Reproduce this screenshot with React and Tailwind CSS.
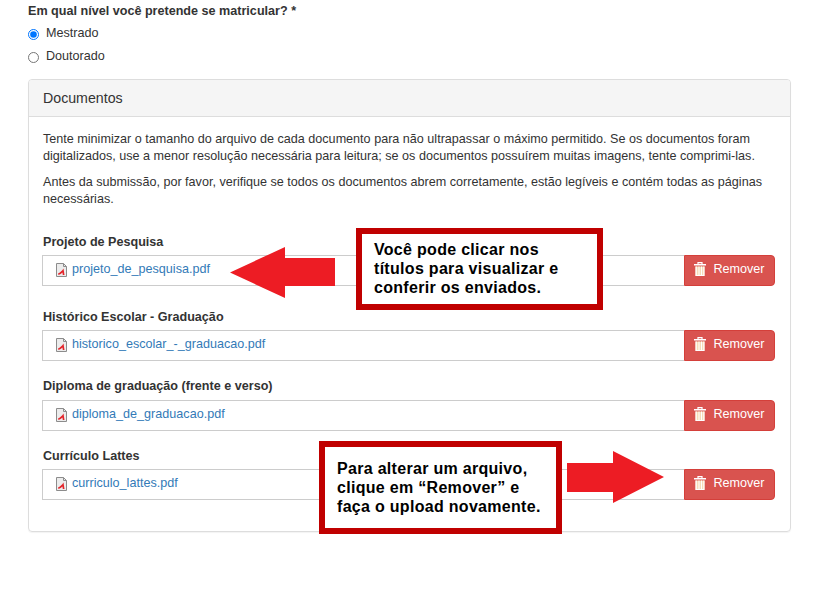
import React from 'react';

const documents = [
  { title: 'Projeto de Pesquisa', file: 'projeto_de_pesquisa.pdf', gap: 'mt-[26px]', inputGap: 'mt-[4px]' },
  { title: 'Histórico Escolar - Graduação', file: 'historico_escolar_-_graduacao.pdf', gap: 'mt-[23px]', inputGap: 'mt-[4px]' },
  { title: 'Diploma de graduação (frente e verso)', file: 'diploma_de_graduacao.pdf', gap: 'mt-[17px]', inputGap: 'mt-[5px]' },
  { title: 'Currículo Lattes', file: 'curriculo_lattes.pdf', gap: 'mt-[17px]', inputGap: 'mt-[4px]' },
];

const PdfIcon = () => (
  <svg width="11" height="14" viewBox="0 0 11 14" className="shrink-0 -translate-y-px">
    <path d="M0.5 0.5H7.5L10.5 3.5V13.5H0.5Z" fill="#ececec" stroke="#8c8c8c" />
    <path d="M7.5 0.5V3.5H10.5" fill="none" stroke="#8c8c8c" />
    <path d="M2 10.5C4 9.5 6 8 7.5 5.5L8.5 12H6.8L6.4 9.5C5.5 10.5 4 11.5 2.5 12Z" fill="#e3252b" />
  </svg>
);

const TrashIcon = () => (
  <svg width="12" height="14" viewBox="0 0 12 14" className="shrink-0 -translate-y-[2px]">
    <path d="M4 2V0.6H8V2" fill="none" stroke="#fff" strokeWidth="1.2" />
    <rect x="0" y="2" width="12" height="1.5" fill="#fff" />
    <path d="M1.5 4.5H10.5V14H1.5Z" fill="#f6dcb8" />
    <path d="M1.5 4.5H2.8V14H1.5ZM4.5 4.5H5.5V14H4.5ZM7 4.5H8V14H7ZM9.3 4.5H10.5V14H9.3ZM1.5 13H10.5V14H1.5Z" fill="#fff" />
  </svg>
);

const ArrowLeft = () => (
  <svg width="106" height="51" viewBox="0 0 106 51" className="absolute left-[230px] top-[247px]">
    <path d="M0 25.5L55 0V11H105V39H55V51Z" fill="#ed1c24" />
  </svg>
);

const ArrowRight = () => (
  <svg width="98" height="53" viewBox="0 0 98 53" className="absolute left-[567px] top-[451px]">
    <path d="M0 12H46V0L97 26L46 52V41H0Z" fill="#ed1c24" />
  </svg>
);

const App = () => {
  return (
    <div className="relative w-[821px] h-[604px] overflow-hidden bg-white px-[28px] pt-[3px] font-['Liberation_Sans',Arial,sans-serif] text-[12.6px] leading-[17px] text-[#333]">
      <p className="font-bold">Em qual nível você pretende se matricular? *</p>

      {/* Level */}
      <label className="mt-[6px] flex h-[17px] items-center">
        <input type="radio" name="nivel" defaultChecked className="m-0 h-[11px] w-[11px] accent-[#0075ff]" />
        <span className="ml-[7px] -translate-y-px">Mestrado</span>
      </label>
      <label className="mt-[6px] flex h-[17px] items-center">
        <input type="radio" name="nivel" className="m-0 h-[11px] w-[11px]" />
        <span className="ml-[7px] -translate-y-px">Doutorado</span>
      </label>

      {/* Documents panel */}
      <div className="mt-[13px] h-[453px] w-[763px] rounded-[4px] border border-[#dddddd] shadow-[0_1px_1px_rgba(0,0,0,0.05)]">
        <div className="flex h-[37px] items-center rounded-t-[3px] border-b border-[#dddddd] bg-[#f5f5f5] px-[14px] text-[14.2px]">
          Documentos
        </div>
        <div className="px-[14px] pt-[14px]">
          <p>
            Tente minimizar o tamanho do arquivo de cada documento para não ultrapassar o máximo permitido. Se os documentos foram
            digitalizados, use a menor resolução necessária para leitura; se os documentos possuírem muitas imagens, tente comprimi-las.
          </p>
          <p className="mt-[9px]">
            Antes da submissão, por favor, verifique se todos os documentos abrem corretamente, estão legíveis e contém todas as páginas
            necessárias.
          </p>

          {documents.map((doc) => (
            <div key={doc.file} className={doc.gap}>
              <div className="h-[17px] font-bold">{doc.title}</div>
              <div className={`${doc.inputGap} -ml-px flex h-[31px] w-[733px]`}>
                <div className="flex flex-1 items-center gap-[5px] border border-r-0 border-[#cccccc] pl-[13px]">
                  <PdfIcon />
                  <a href="#" className="-translate-y-px text-[#337ab7]">{doc.file}</a>
                </div>
                <button className="flex w-[91px] items-center justify-center gap-[7px] rounded-r-[4px] border border-[#d43f3a] bg-[#d9534f] text-white">
                  <TrashIcon />
                  <span className="-translate-y-px">Remover</span>
                </button>
              </div>
            </div>
          ))}
        </div>
      </div>

      {/* Annotations */}
      <ArrowLeft />
      <div className="absolute left-[356px] top-[228px] h-[82px] w-[247px] border-[6px] border-[#c00000] bg-white pl-[12px] pt-[6px] text-[16px] font-bold leading-[19px] tracking-[0.3px] text-black">
        Você pode clicar nos<br />títulos para visualizar e<br />conferir os enviados.
      </div>
      <ArrowRight />
      <div className="absolute left-[319px] top-[441px] h-[93px] w-[243px] border-[6px] border-[#c00000] bg-white pl-[12px] pt-[12px] text-[16px] font-bold leading-[19px] tracking-[0.3px] text-black">
        Para alterar um arquivo,<br />clique em “Remover” e<br />faça o upload novamente.
      </div>
    </div>
  );
};

export default App;
